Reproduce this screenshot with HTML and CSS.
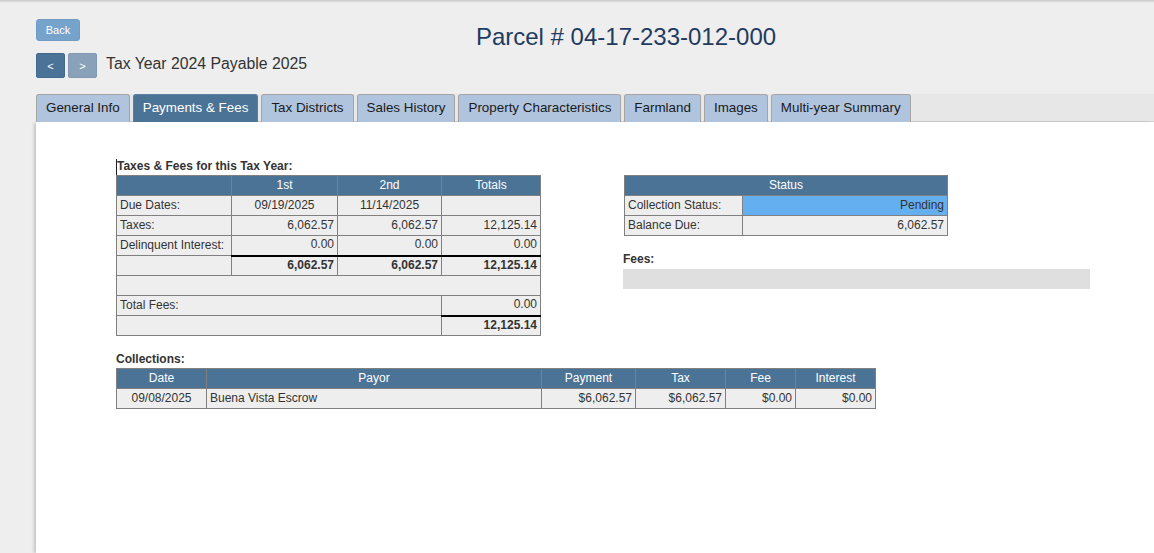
FILE: index.html
```html
<!DOCTYPE html>
<html>
<head>
<meta charset="utf-8">
<link rel="stylesheet" href="styles.css">
</head>
<body>
<div class="topline"></div>
<header class="header">
  <div class="left">
    <button class="btn-back">Back</button>
    <div class="nav">
      <button class="btn-prev">&lt;</button>
      <button class="btn-next">&gt;</button>
      <span class="year">Tax Year 2024 Payable 2025</span>
    </div>
  </div>
  <h1 class="title">Parcel # 04-17-233-012-000</h1>
</header>
<nav class="tabs">
  <span class="tab">General Info</span>
  <span class="tab active">Payments &amp; Fees</span>
  <span class="tab">Tax Districts</span>
  <span class="tab">Sales History</span>
  <span class="tab">Property Characteristics</span>
  <span class="tab">Farmland</span>
  <span class="tab">Images</span>
  <span class="tab">Multi-year Summary</span>
</nav>
<main class="panel">
  <div class="row">
    <section class="col-left">
      <div class="label caret">Taxes &amp; Fees for this Tax Year:</div>
      <table class="grid t-taxes">
        <colgroup><col class="c1"><col class="c2"><col class="c3"><col class="c4"></colgroup>
        <tr><th></th><th>1st</th><th>2nd</th><th>Totals</th></tr>
        <tr><td>Due Dates:</td><td class="ctr">09/19/2025</td><td class="ctr">11/14/2025</td><td></td></tr>
        <tr><td>Taxes:</td><td class="num">6,062.57</td><td class="num">6,062.57</td><td class="num">12,125.14</td></tr>
        <tr><td>Delinquent Interest:</td><td class="num">0.00</td><td class="num">0.00</td><td class="num">0.00</td></tr>
        <tr><td></td><td class="num sum">6,062.57</td><td class="num sum">6,062.57</td><td class="num sum">12,125.14</td></tr>
        <tr><td colspan="4"></td></tr>
        <tr><td colspan="3">Total Fees:</td><td class="num">0.00</td></tr>
        <tr><td colspan="3"></td><td class="num sum">12,125.14</td></tr>
      </table>
    </section>
    <section class="col-right">
      <table class="grid t-status">
        <colgroup><col class="s1"><col class="s2"></colgroup>
        <tr><th colspan="2">Status</th></tr>
        <tr><td>Collection Status:</td><td class="num pending">Pending</td></tr>
        <tr><td>Balance Due:</td><td class="num">6,062.57</td></tr>
      </table>
      <div class="label fees-label">Fees:</div>
      <div class="fees-bar"></div>
    </section>
  </div>
  <section class="collections">
    <div class="label coll-label">Collections:</div>
    <table class="grid t-coll">
      <colgroup><col class="k1"><col class="k2"><col class="k3"><col class="k4"><col class="k5"><col class="k6"></colgroup>
      <tr><th>Date</th><th>Payor</th><th>Payment</th><th>Tax</th><th>Fee</th><th>Interest</th></tr>
      <tr><td class="ctr">09/08/2025</td><td>Buena Vista Escrow</td><td class="num">$6,062.57</td><td class="num">$6,062.57</td><td class="num">$0.00</td><td class="num">$0.00</td></tr>
    </table>
  </section>
</main>
</body>
</html>
```
FILE: styles.css
```css
* { box-sizing: border-box; }
html, body { margin: 0; height: 100%; }
body {
  background: #eeeeee;
  font-family: "Liberation Sans", Arial, sans-serif;
  color: #333;
  overflow: hidden;
}
.topline {
  height: 3px;
  background: linear-gradient(#c8c8c8, #eeeeee);
}
.header {
  display: grid;
  height: 91px;
}
.header > * { grid-area: 1 / 1; }
.left {
  padding: 16px 0 0 36px;
}
.btn-back {
  display: block;
  width: 44px;
  height: 22px;
  border: 1px solid #6e9cc6;
  border-radius: 3px;
  background: #76a3cc;
  color: #fff;
  font: 11px "Liberation Sans", Arial, sans-serif;
  padding: 0;
}
.nav {
  display: flex;
  align-items: center;
  margin-top: 12px;
}
.btn-prev, .btn-next {
  width: 29px;
  height: 25px;
  border: 1px solid #44688d;
  border-radius: 2px;
  background: #4b7398;
  color: #fff;
  font: 11px "Liberation Sans", Arial, sans-serif;
  padding: 0;
}
.btn-next {
  margin-left: 3px;
  background: #89a2ba;
  border-color: #8199b1;
}
.year {
  margin-left: 9px;
  font-size: 15.8px;
  color: #333;
  position: relative;
  top: -2px;
}
.title {
  margin: 0;
  padding: 20px 0 0 98px;
  text-align: center;
  font-weight: normal;
  font-size: 24px;
  color: #1f3b60;
}
.tabs {
  display: flex;
  margin-left: 36px;
  gap: 3px;
  height: 28px;
  background: #e7e7e7;
  border-bottom: 1px solid #cfcfcf;
}
.tab {
  display: flex;
  align-items: center;
  height: 28px;
  padding: 0 9px 2px;
  background: #b0c4de;
  border: 1px solid #a5a5a5;
  border-bottom: none;
  border-radius: 3px 3px 0 0;
  font-size: 13.4px;
  color: #1a1a1a;
}
.tab.active {
  background: #4b7396;
  color: #fff;
  border-color: #5a7fa0;
}
.panel {
  margin-left: 36px;
  background: #fff;
  height: 432px;
  box-shadow: -3px 0 3px -1px rgba(0,0,0,0.18);
  padding: 37px 0 0 80px;
}
.row {
  display: flex;
  gap: 83px;
}
.label {
  font-size: 12px;
  font-weight: bold;
  color: #333;
  line-height: 14px;
  height: 15px;
}
.caret {
  border-left: 1px solid #222;
  height: 16px;
}
.grid {
  border-collapse: collapse;
  table-layout: fixed;
  font-size: 12px;
  color: #333;
}
.grid th, .grid td {
  border: 1px solid #808080;
  height: 20px;
  padding: 0 3px 2px;
  line-height: 16px;
  white-space: nowrap;
  overflow: hidden;
}
.grid th {
  background: #4b7396;
  color: #fff;
  font-weight: normal;
  text-align: center;
}
.grid td {
  background: #eeeeee;
  text-align: left;
}
.grid td.num { text-align: right; }
.grid td.ctr { text-align: center; }
.grid td.sum {
  font-weight: bold;
  border-top: 2px solid #000;
}
.grid td.pending { background: #63aff0; }
.t-taxes { width: 424px; }
.c1 { width: 115px; }
.c2 { width: 106px; }
.c3 { width: 104px; }
.c4 { width: 99px; }
.col-right {
  padding-top: 16px;
  width: 466px;
}
.t-status { width: 323px; }
.s1 { width: 118px; }
.s2 { width: 205px; }
.fees-label {
  margin-top: 16px;
  margin-left: -1px;
}
.fees-bar {
  height: 20px;
  margin-top: 2px;
  margin-left: -1px;
  background: #dfdfdf;
}
.collections {
  margin-top: 16px;
}
.coll-label {
  margin-bottom: 1px;
}
.t-coll { width: 759px; }
.k1 { width: 90px; }
.k2 { width: 335px; }
.k3 { width: 94px; }
.k4 { width: 90px; }
.k5 { width: 70px; }
.k6 { width: 80px; }
```
